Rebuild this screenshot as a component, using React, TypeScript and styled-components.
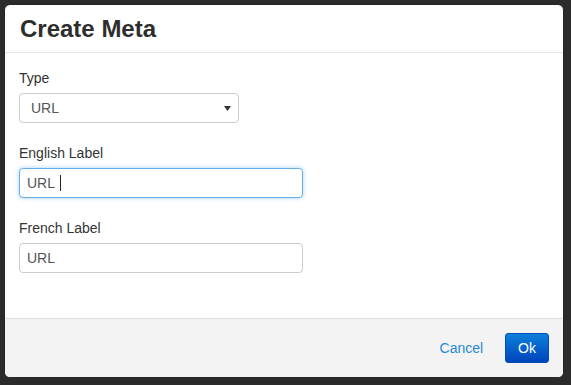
import React from 'react';
import styled, { createGlobalStyle } from 'styled-components';

const GlobalStyle = createGlobalStyle`
  html, body {
    margin: 0;
    padding: 0;
    background: #2b2b2b;
  }

  body {
    font-family: "Liberation Sans", Arial, sans-serif;
    font-size: 14px;
    color: #333;
  }
`;

const Backdrop = styled.div`
  width: 571px;
  height: 385px;
  padding: 4px;
  box-sizing: border-box;
  background: #2b2b2b;
`;

const Modal = styled.div`
  width: 560px;
  height: 374px;
  box-sizing: border-box;
  display: flex;
  flex-direction: column;

  background: #fff;
  border: 1px solid #262626;
  border-radius: 6px;
  overflow: hidden;
`;

const Header = styled.div`
  padding: 10px 15px;
  border-bottom: 1px solid #e5e5e5;
`;

const Title = styled.h4`
  margin: 0;
  font-size: 24px;
  line-height: 27px;
  font-weight: bold;
  color: #2e2e2e;
`;

const Body = styled.div`
  padding: 15px 14px 25px;
`;

const FormGroup = styled.div`
  margin-bottom: 20px;
`;

const Label = styled.label`
  display: block;
  margin-bottom: 5px;
  line-height: 20px;
  color: #333;
`;

const Control = styled.div<{ $width: number; $focused?: boolean }>`
  position: relative;
  display: flex;
  align-items: center;
  width: ${(p) => p.$width}px;
  height: 30px;
  box-sizing: border-box;
  padding: 0 7px;

  color: #555;
  background: #fff;
  border: 1px solid ${(p) => (p.$focused ? '#66afe9' : '#ccc')};
  border-radius: 4px;
  box-shadow: ${(p) => (p.$focused ? '0 0 4px rgba(102, 175, 233, 0.6)' : 'none')};
`;

const SelectBox = styled(Control)`
  padding: 0 7px 0 11px;
  justify-content: space-between;
`;

const Caret = styled.span`
  display: inline-block;
  width: 1px;
  height: 16px;
  margin-left: 5px;
  background: #222;
`;

const Footer = styled.div`
  flex: 1;
  display: flex;
  align-items: center;
  justify-content: flex-end;
  gap: 22px;
  padding: 0 14px 1px;

  background: #f3f3f3;
  border-top: 1px solid #e0e0e0;
`;

const LinkButton = styled.button`
  padding: 0;
  border: none;
  background: none;
  font: inherit;
  color: #1f8ad6;
  cursor: pointer;
`;

const PrimaryButton = styled.button`
  height: 30px;
  padding: 0 12px;
  border: 1px solid #0050b8;
  border-radius: 3px;
  background: linear-gradient(to bottom, #0d7fd9, #0044bd);
  color: #fff;
  font: inherit;
  cursor: pointer;
`;

const ArrowDown = () => (
  <svg width="7" height="5" viewBox="0 0 7 5">
    <path d="M0 0 H7 L3.5 5 Z" fill="#333" />
  </svg>
);

export default function App() {
  return <>
    <GlobalStyle />
    <Backdrop>
      <Modal>
        <Header>
          <Title>Create Meta</Title>
        </Header>
        <Body>
          <FormGroup>
            <Label>Type</Label>
            <SelectBox $width={220}>
              <span>URL</span>
              <ArrowDown />
            </SelectBox>
          </FormGroup>
          <FormGroup>
            <Label>English Label</Label>
            <Control $width={284} $focused>
              URL<Caret />
            </Control>
          </FormGroup>
          <FormGroup>
            <Label>French Label</Label>
            <Control $width={284}>URL</Control>
          </FormGroup>
        </Body>
        <Footer>
          <LinkButton>Cancel</LinkButton>
          <PrimaryButton>Ok</PrimaryButton>
        </Footer>
      </Modal>
    </Backdrop>
  </>;
}
